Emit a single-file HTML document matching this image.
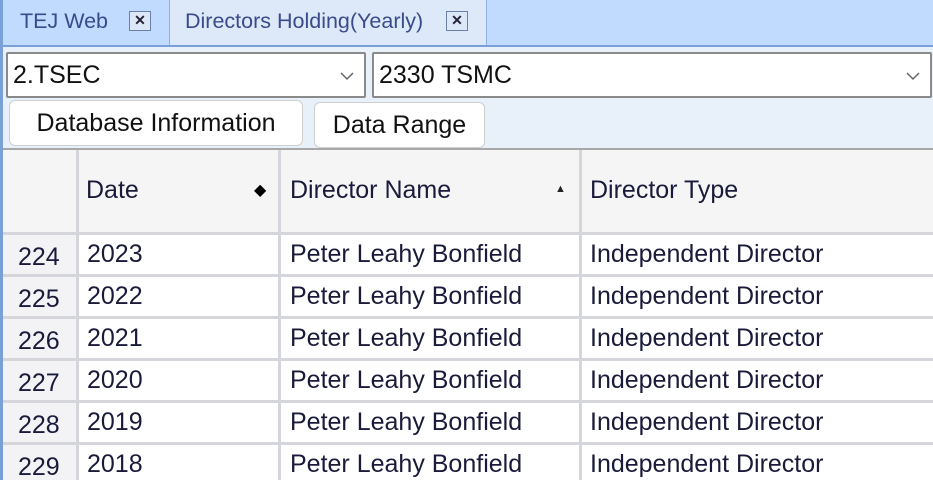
<!DOCTYPE html>
<html><head><style>
html,body{margin:0;width:933px;height:480px;overflow:hidden}
body{background:#e8f0f9;font-family:"Liberation Sans",sans-serif;position:relative}
.abs{position:absolute;white-space:nowrap}
.tabbar{left:0;top:0;width:933px;height:45px;background:#c0dbff;border-bottom:2px solid #7aa0d8}
.tab{top:0;height:45px;font-size:21.5px;color:#3a4a8a;line-height:42px}
.x{width:20px;height:18px;border:1px solid #6b7fa8;background:#dce8f8;font-size:14px;font-weight:bold;text-align:center;line-height:17px;color:#223}
.combo{top:52px;background:#fff;border:2px solid #8a8a8a;border-radius:2px;font-size:25px;line-height:42px;padding-left:5px;box-sizing:border-box;height:46px;color:#111}
.btn{top:101px;height:46px;background:#fff;border:1px solid #cfcfcf;border-radius:6px;font-size:25px;line-height:44px;box-sizing:border-box;text-align:center;color:#111}
.grid{left:3px;top:148px;width:930px;height:332px;background:#fff;border-top:2px solid #a8a8a8;overflow:hidden}
.hline{height:3px;background:#d4d6dc;left:0;width:930px}
.vline{width:3px;background:#d4d6dc;top:0;height:332px}
.t{font-size:25px;color:#1a1a3a}
</style></head><body>
<div class="abs tabbar"></div>
<div class="abs" style="left:0;top:0;width:3px;height:480px;background:#7aa0d8"></div>
<div class="abs tab" style="left:20px">TEJ Web</div>
<div class="abs x" style="left:129px;top:11px">✕</div>
<div class="abs" style="left:169px;top:0;width:316px;height:45px;background:#dde9f8;border-left:1px solid #8fb0e0;border-right:1px solid #8fb0e0"></div>
<div class="abs tab" style="left:185px">Directors Holding(Yearly)</div>
<div class="abs x" style="left:446px;top:11px">✕</div>
<div class="abs combo" style="left:6px;width:360px">2.TSEC<svg class="abs" style="right:10px;top:18px" width="14" height="9"><path d="M1 1 L7 7 L13 1" stroke="#666" stroke-width="1.5" fill="none"/></svg></div>
<div class="abs combo" style="left:372px;width:560px">2330 TSMC<svg class="abs" style="right:10px;top:18px" width="14" height="9"><path d="M1 1 L7 7 L13 1" stroke="#666" stroke-width="1.5" fill="none"/></svg></div>
<div class="abs btn" style="left:9px;width:294px;top:100px">Database Information</div>
<div class="abs btn" style="left:314px;width:171px;top:102px">Data Range</div>
<div class="abs grid">
<div class="abs" style="left:0;top:0;width:930px;height:83px;background:#f5f5f6"></div>
<div class="abs" style="left:0;top:83px;width:74px;height:249px;background:#f3f3f6"></div>
<div class="abs hline" style="top:82px"></div>
<div class="abs hline" style="top:124px"></div>
<div class="abs hline" style="top:166px"></div>
<div class="abs hline" style="top:208px"></div>
<div class="abs hline" style="top:250px"></div>
<div class="abs hline" style="top:292px"></div>
<div class="abs vline" style="left:73px"></div>
<div class="abs vline" style="left:275px"></div>
<div class="abs vline" style="left:576px"></div>
<div class="abs t" style="left:83px;top:26px">Date</div>
<div class="abs" style="left:251px;top:30px;font-size:16px">◆</div>
<div class="abs t" style="left:287px;top:26px">Director Name</div>
<div class="abs" style="left:552px;top:33px;font-size:11px;color:#222">▲</div>
<div class="abs t" style="left:587px;top:26px">Director Type</div>
</div>
<div class="abs" style="left:0;top:234px">
<div class="abs t" style="left:18px;top:9px">224</div><div class="abs t" style="left:87px;top:6px">2023</div><div class="abs t" style="left:290px;top:6px">Peter Leahy Bonfield</div><div class="abs t" style="left:590px;top:6px">Independent Director</div>
<div class="abs t" style="left:18px;top:51px">225</div><div class="abs t" style="left:87px;top:48px">2022</div><div class="abs t" style="left:290px;top:48px">Peter Leahy Bonfield</div><div class="abs t" style="left:590px;top:48px">Independent Director</div>
<div class="abs t" style="left:18px;top:93px">226</div><div class="abs t" style="left:87px;top:90px">2021</div><div class="abs t" style="left:290px;top:90px">Peter Leahy Bonfield</div><div class="abs t" style="left:590px;top:90px">Independent Director</div>
<div class="abs t" style="left:18px;top:135px">227</div><div class="abs t" style="left:87px;top:132px">2020</div><div class="abs t" style="left:290px;top:132px">Peter Leahy Bonfield</div><div class="abs t" style="left:590px;top:132px">Independent Director</div>
<div class="abs t" style="left:18px;top:177px">228</div><div class="abs t" style="left:87px;top:174px">2019</div><div class="abs t" style="left:290px;top:174px">Peter Leahy Bonfield</div><div class="abs t" style="left:590px;top:174px">Independent Director</div>
<div class="abs t" style="left:18px;top:219px">229</div><div class="abs t" style="left:87px;top:216px">2018</div><div class="abs t" style="left:290px;top:216px">Peter Leahy Bonfield</div><div class="abs t" style="left:590px;top:216px">Independent Director</div>
</div>
</body></html>
